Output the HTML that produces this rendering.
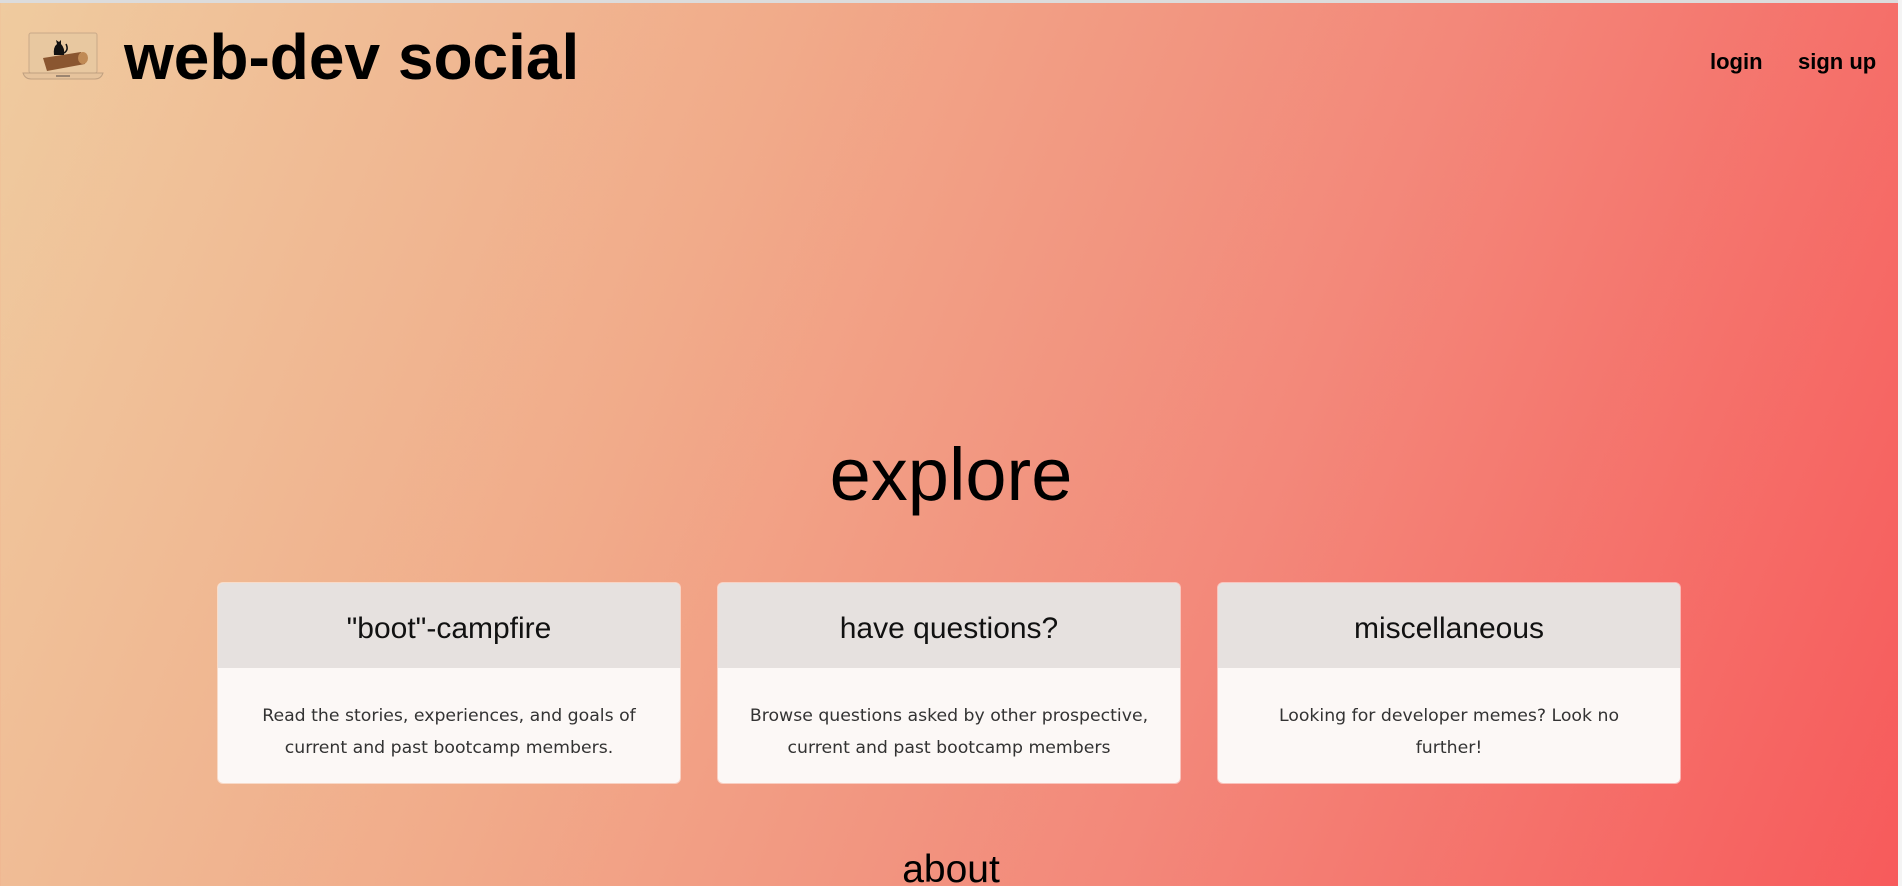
<!DOCTYPE html>
<html><head><style>
html,body{margin:0;padding:0;width:1902px;height:886px;overflow:hidden}
body{position:relative;background:linear-gradient(112deg,#efcb9f 0%,#f1ab8a 35%,#f3887a 65%,#f75a5b 100%);font-family:"Liberation Sans",Arial,sans-serif}
.topline{position:absolute;left:0;top:0;width:1902px;height:3px;background:#dcdcdc}
.sb{position:absolute;right:0;top:0;width:4px;height:886px;background:#f4f4f4}
.logo{position:absolute;left:21px;top:30px}
.title{position:absolute;left:124px;top:19px;font-size:64px;font-weight:bold;color:#000;line-height:76px}
.nav{position:absolute;top:49px;font-size:22px;font-weight:bold;color:#000}
.explore{position:absolute;left:0;width:1902px;top:427px;text-align:center;font-size:74px;line-height:96px;color:#000}
.card{position:absolute;top:583px;width:462px;height:200px;border-radius:5px;overflow:hidden;background:#fcf8f6;box-shadow:0 0 0 1px rgba(255,255,255,.5)}
.card h3{margin:0;height:85px;background:#e6e1df;font-weight:normal;font-size:30px;line-height:91px;text-align:center;color:#111}
.card p{margin:32px 28px 0;text-align:center;line-height:32px;color:#333;font-family:"DejaVu Sans","Liberation Sans",sans-serif;font-size:17.3px}
.about{position:absolute;left:0;width:1902px;top:846px;text-align:center;font-size:39px;line-height:48px;color:#000}
</style></head><body>
<div class="topline"></div>
<svg class="logo" width="84" height="50" viewBox="0 0 84 50">
<rect x="8" y="3" width="68" height="40" rx="2" fill="#e8c8a0" stroke="#c9a989" stroke-width="1"/>
<path d="M2 43 H82 Q80 49 74 49 H10 Q4 49 2 43Z" fill="#e6c39c" stroke="#c0a080" stroke-width="1"/>
<rect x="35" y="45" width="14" height="2" fill="#9b8570"/>
<path d="M22 28 L60 22 L64 34 L26 41Z" fill="#8a5630"/>
<ellipse cx="62" cy="28" rx="5" ry="6" fill="#c08a55"/>
<path d="M33 25 Q32 17 36 14 L35 10 L38 12 L40 10 L40 14 Q44 18 43 25Z" fill="#111"/>
<path d="M43 23 Q48 20 45 14" stroke="#111" stroke-width="1.5" fill="none"/>
</svg>
<div class="title">web-dev social</div>
<div class="nav" style="left:1710px">login</div>
<div class="nav" style="left:1798px">sign up</div>
<div class="explore">explore</div>
<div class="card" style="left:218px"><h3>"boot"-campfire</h3><p>Read the stories, experiences, and goals of current and past bootcamp members.</p></div>
<div class="card" style="left:718px"><h3>have questions?</h3><p>Browse questions asked by other prospective, current and past bootcamp members</p></div>
<div class="card" style="left:1218px"><h3>miscellaneous</h3><p>Looking for developer memes? Look no further!</p></div>
<div class="about">about</div>
<div class="sb"></div>
</body></html>
